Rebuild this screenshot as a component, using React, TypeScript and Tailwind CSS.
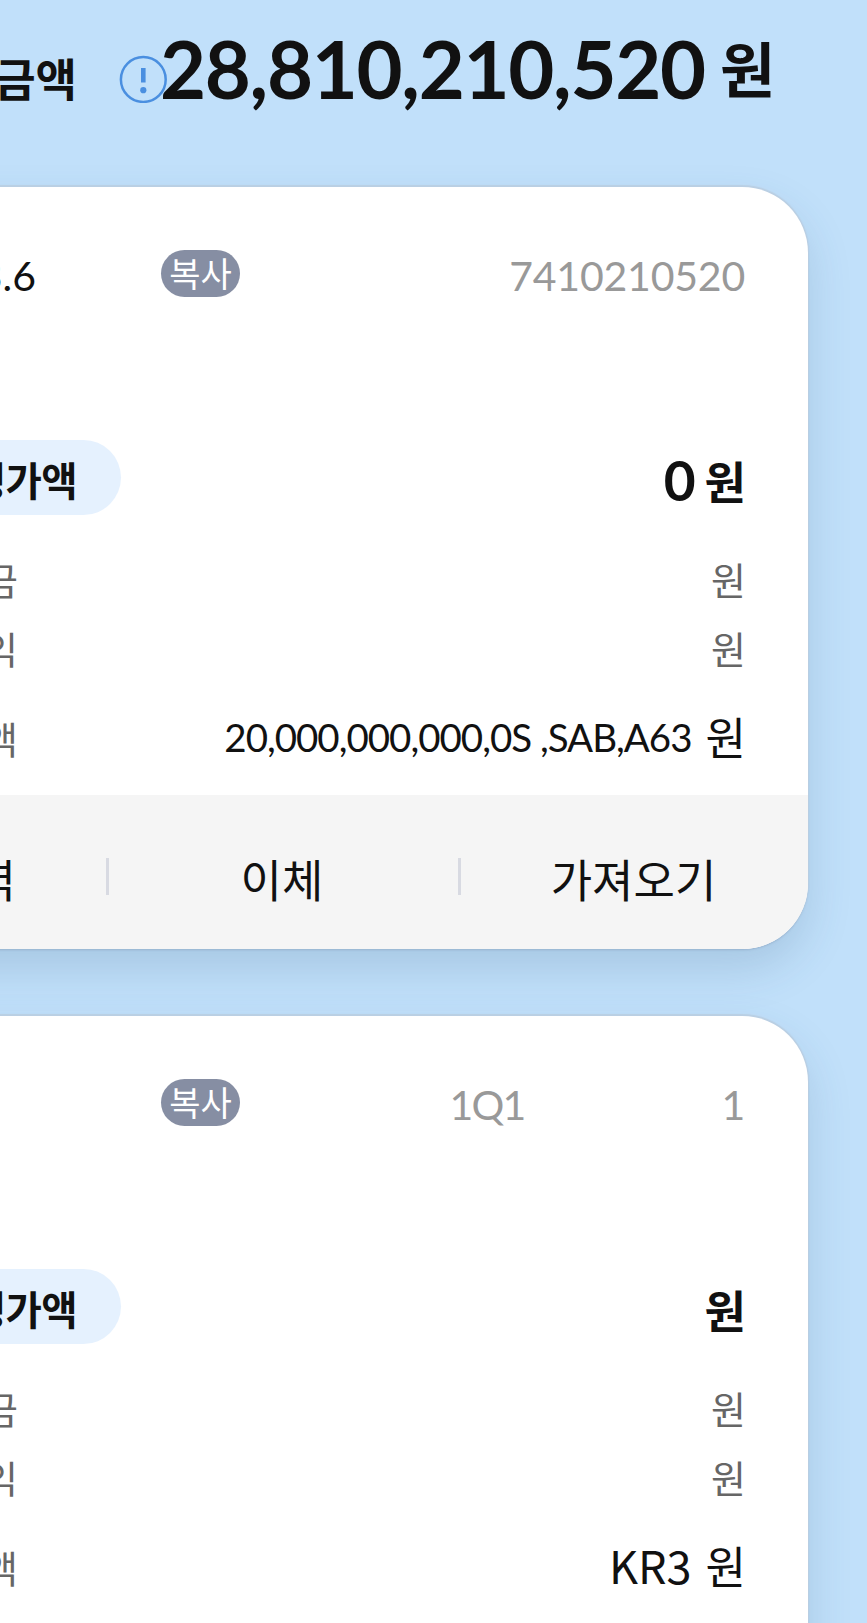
type Account = {
  name: string;
  number: string[];
  value: string;
  balance: string;
  balanceClass: string;
};

const accounts: Account[] = [
  {
    name: "3.6",
    number: ["7410210520"],
    value: "0",
    balance: "20,000,000,000,0S ,SAB,A63",
    balanceClass: "font-['Lato',sans-serif] text-[38.5px] tracking-[-1px] pt-[3px]",
  },
  {
    name: "",
    number: ["1Q1", "1"],
    value: "",
    balance: "KR3",
    balanceClass: "text-[45px]",
  },
];

function InfoIcon() {
  return (
    <svg viewBox="0 0 48 48" className="h-12 w-12 shrink-0" fill="none">
      <circle cx="24.3" cy="24.5" r="22.4" stroke="#4a8fe0" strokeWidth="2.5" />
      <path d="M24.3 13v14.5" stroke="#4a8fe0" strokeWidth="4.6" />
      <circle cx="24.3" cy="35.2" r="3.1" fill="#4a8fe0" />
    </svg>
  );
}

function DetailRow({ label }: { label: string }) {
  return (
    <div className="flex h-[69px] items-center justify-between text-[38px] text-[#666]">
      <span className="flex w-[18px] justify-end">{label}</span>
      <span>원</span>
    </div>
  );
}

function AccountCard({ account }: { account: Account }) {
  return (
    <article className="mr-[59px] -ml-40 h-[762px] shrink-0 overflow-hidden rounded-[66px] bg-white shadow-[0_-1px_1px_1px_#bacfe3,0_1px_2px_rgba(120,140,170,0.45),0_20px_44px_rgba(50,90,125,0.18)]">
      <div className="flex h-[608px] flex-col pt-[63px] pr-[62px] pl-40">
        <div className="flex h-[47px] items-center font-['Lato','Noto_Sans_CJK_KR',sans-serif] text-[41px]">
          <span className="flex w-[161px] pt-1 text-[#111]">
            <span className="flex w-[36px] justify-end">{account.name}</span>
          </span>
          <button className="flex h-[47px] w-[79px] items-center justify-center rounded-full bg-[#868ea3] pb-[2px] font-['Noto_Sans_CJK_KR',sans-serif] text-[34px] text-white">
            복사
          </button>
          <span className="ml-auto flex gap-[197px] pt-1 pr-px text-[#999] tracking-[-0.2px]">
            {account.number.map((part) => (
              <span
                key={part}
                className={part === "1Q1" ? "tracking-[-1.8px]" : ""}
              >
                {part}
              </span>
            ))}
          </span>
        </div>

        <div className="mt-[143px] flex h-[75px] items-center justify-between font-bold">
          <span className="flex h-[75px] w-[121px] items-center justify-end rounded-r-full bg-[#e5f1fe] pt-[3px] pr-[44px] text-[39.5px] tracking-[-0.6px]">
            평가액
          </span>
          <span className="flex items-center gap-[9px] pt-[5px] text-[45px]">
            <span className="font-['Lato',sans-serif] text-[55px]">
              {account.value}
            </span>
            원
          </span>
        </div>

        <div className="mt-[29px]">
          <DetailRow label="원금" />
          <DetailRow label="손익" />
        </div>

        <div className="mt-[19px] flex h-[69px] items-center justify-between">
          <span className="flex w-[18px] justify-end pt-[5px] text-[38px] text-[#666]">
            금액
          </span>
          <span className="flex items-center gap-[14px]">
            <span className={account.balanceClass}>{account.balance}</span>
            <span className="text-[44px]">원</span>
          </span>
        </div>
      </div>

      <footer className="flex h-[154px] items-center bg-[#f5f5f5] pt-[9px] pl-40 text-[45px]">
        <span className="flex w-[106px] pt-[3px]">
          <span className="flex w-[16px] justify-end">거래내역</span>
        </span>
        <span className="h-[37px] w-[3px] bg-[#d8dae2]" />
        <span className="flex-1 pt-[3px] pr-[3px] text-center">이체</span>
        <span className="h-[37px] w-[3px] bg-[#d8dae2]" />
        <span className="w-[347px] pt-[3px] pr-[2px] text-center">
          가져오기
        </span>
      </footer>
    </article>
  );
}

export default function App() {
  return (
    <main className="flex h-[1623px] w-[867px] flex-col overflow-hidden bg-[#c1e0fa] font-['Noto_Sans_CJK_KR',sans-serif] leading-none whitespace-nowrap text-[#111]">
      <header className="flex h-[187px] shrink-0 items-start font-bold">
        <span className="flex w-[77px] justify-end pt-[55px] text-[45px]">
          금액
        </span>
        <span className="ml-[42px] pt-[55px]">
          <InfoIcon />
        </span>
        <span className="-ml-[7px] w-[548px] pt-[29px] font-['Lato',sans-serif] text-[79.5px] tracking-[-1.3px]">
          28,810,210,520
        </span>
        <span className="ml-[12px] pt-[37px] text-[60px]">원</span>
      </header>

      <div className="flex flex-col gap-[67px]">
        {accounts.map((account) => (
          <AccountCard key={account.balance} account={account} />
        ))}
      </div>
    </main>
  );
}
